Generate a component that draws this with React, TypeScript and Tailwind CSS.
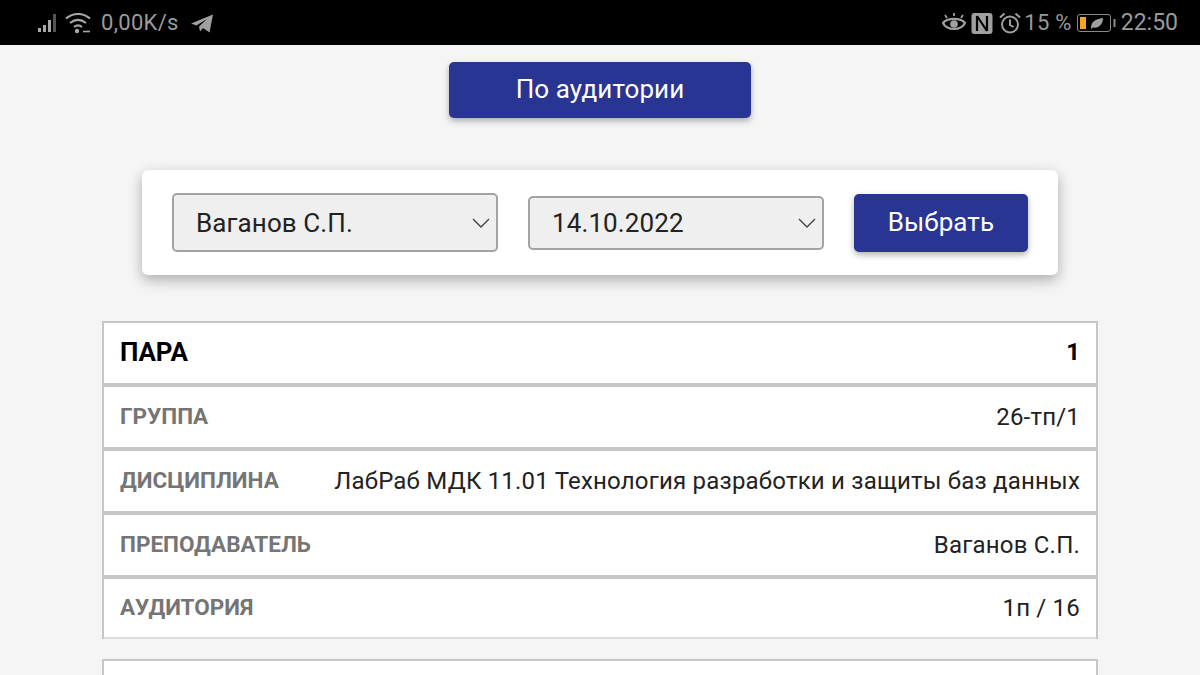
const rows = [
  { label: "ГРУППА", value: "26-тп/1" },
  { label: "ДИСЦИПЛИНА", value: "ЛабРаб МДК 11.01 Технология разработки и защиты баз данных" },
  { label: "ПРЕПОДАВАТЕЛЬ", value: "Ваганов С.П." },
  { label: "АУДИТОРИЯ", value: "1п / 16" },
];

function StatusLeft() {
  return (
    <div className="flex items-center text-[#9a9a9a]">
      {/* signal */}
      <svg width="22" height="24" viewBox="0 0 22 24" className="ml-[37px]">
        <rect x="1" y="17" width="3" height="4" fill="#a8a8a8" />
        <rect x="6" y="14" width="3" height="7" fill="#a8a8a8" />
        <rect x="11" y="9" width="3" height="12" fill="#a8a8a8" />
        <rect x="16" y="3" width="3" height="18" fill="#555" />
      </svg>
      {/* wifi */}
      <svg width="26" height="24" viewBox="0 0 26 24" fill="none" stroke="#a8a8a8" strokeWidth="2.2" className="ml-[6px]">
        <path d="M1 7.5C8 1.5 18 1.5 25 7.5" />
        <path d="M5 12C10 8 16 8 21 12" />
        <path d="M9 16C11.5 14 14.5 14 17 16" />
        <circle cx="12" cy="20" r="2.2" fill="#a8a8a8" stroke="none" />
        <path d="M18 20.5h7" strokeWidth="1.6" />
      </svg>
      <span className="ml-[10px] text-[22px] leading-none tracking-[0.3px]">0,00K/s</span>
      {/* telegram */}
      <svg width="24" height="22" viewBox="0 0 24 22" className="ml-[11px]">
        <path d="M1 11.5L23 2.5L19.5 20.5L13 16L10 19.5L9 14.5L17 7L6.5 13.5Z" fill="#a0a0a0" />
      </svg>
    </div>
  );
}

function StatusRight() {
  return (
    <div className="flex items-center text-[#9a9a9a]">
      {/* eye */}
      <svg width="24" height="24" viewBox="0 0 24 24" fill="none" stroke="#a0a0a0" strokeWidth="2.2">
        <path d="M1 12C5 6.5 19 6.5 23 12C19 20 5 20 1 12Z" />
        <circle cx="12" cy="13" r="3.8" fill="#a0a0a0" stroke="none" />
        <path d="M5 7L3 4M12 5V2M19 7L21 4" strokeWidth="1.8" />
      </svg>
      {/* nfc */}
      <svg width="22" height="24" viewBox="0 0 22 24" className="ml-[5px]">
        <rect x="0.5" y="2" width="21" height="21" rx="3" fill="#a0a0a0" />
        <path d="M6 5V20M6 5L16 20M16 5V20" stroke="#000" strokeWidth="2.2" fill="none" />
      </svg>
      {/* alarm */}
      <svg width="24" height="24" viewBox="0 0 24 24" fill="none" stroke="#a0a0a0" strokeWidth="2" className="ml-[5px]">
        <circle cx="12" cy="13.5" r="8" />
        <path d="M12 8.5V14L15.5 16M2 6.5L6.5 2.5M22 6.5L17.5 2.5" />
      </svg>
      <span className="ml-[2px] text-[22px] leading-none tracking-[0.3px]">15 %</span>
      {/* battery */}
      <svg width="39" height="18" viewBox="0 0 39 18" className="ml-[5px]">
        <rect x="0.5" y="0.5" width="33" height="17" rx="2.5" fill="none" stroke="#8a8a8a" />
        <rect x="3" y="3" width="6" height="12" fill="#f5a623" />
        <path d="M14 14C14 8 18 5 26 4C26 10 22 14.5 16 13.5L14 15Z" fill="#a0a0a0" />
        <rect x="36.5" y="5" width="2" height="8" fill="#8a8a8a" />
      </svg>
      <span className="ml-[5px] text-[23px] leading-none">22:50</span>
    </div>
  );
}

function FakeSelect({ value, className }: { value: string; className: string }) {
  return (
    <div className={`flex items-center justify-between rounded-[5px] border-2 border-[#a3a3a3] bg-[#efefef] pl-[22px] pr-[6px] ${className}`}>
      <span className="text-[26px] leading-none tracking-[0.1px] text-[#222]">{value}</span>
      <svg width="18" height="10" viewBox="0 0 18 10" fill="none" stroke="#444" strokeWidth="1.4">
        <path d="M1 1L9 9L17 1" />
      </svg>
    </div>
  );
}

export default function App() {
  return (
    <div className="h-[675px] w-[1200px] overflow-hidden bg-[#f5f5f5] font-['Roboto',sans-serif]">
      <div className="flex h-[45px] items-center justify-between bg-black pr-[22px]">
        <StatusLeft />
        <StatusRight />
      </div>

      <div className="flex justify-center pt-[17px]">
        <button className="h-[56px] w-[302px] rounded-[5px] bg-[#293593] pb-[2px] text-[26px] tracking-[0.1px] text-white shadow-[0_3px_6px_rgba(0,0,0,0.3)]">
          По аудитории
        </button>
      </div>

      <div className="mx-auto mt-[52px] flex h-[105px] w-[916px] items-center gap-[30px] rounded-[6px] bg-white pl-[30px] shadow-[0_5px_14px_rgba(0,0,0,0.3)]">
        <FakeSelect value="Ваганов С.П." className="h-[59px] w-[326px]" />
        <FakeSelect value="14.10.2022" className="h-[54px] w-[296px]" />
        <button className="h-[58px] w-[174px] rounded-[5px] bg-[#293593] text-[26px] tracking-[0.1px] text-white shadow-[0_3px_6px_rgba(0,0,0,0.3)]">
          Выбрать
        </button>
      </div>

      <div className="mx-auto mt-[46px] w-[996px] border-2 border-b-0 border-[#c6c6c6] bg-white">
        <div className="flex h-[60px] items-center justify-between px-[16px] pb-[2px] text-[26px] font-bold text-black">
          <span>ПАРА</span>
          <span className="text-[24px]">1</span>
        </div>
        {rows.map((row, i) => (
          <div
            key={row.label}
            className={`flex h-[64px] items-center justify-between border-t-[4px] border-[#c6c6c6] px-[16px] pb-[1px] ${i === 3 ? "border-b-2 border-b-[#dcdcdc]" : ""}`}
          >
            <span className="text-[22.5px] font-bold text-[#757575]">{row.label}</span>
            <span className="text-[24px] tracking-[0.2px] text-[#222]">{row.value}</span>
          </div>
        ))}
      </div>

      <div className="mx-auto mt-[20px] h-[40px] w-[996px] border-2 border-[#c6c6c6] bg-white" />
    </div>
  );
}
